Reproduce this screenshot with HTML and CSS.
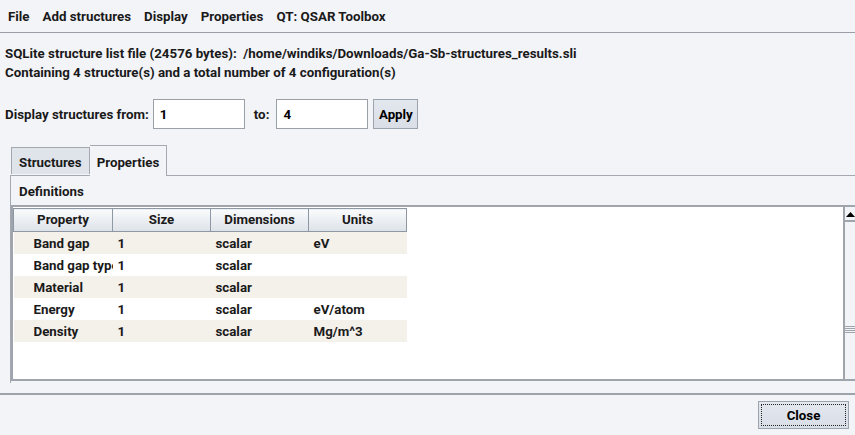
FILE: index.html
```html
<!DOCTYPE html>
<html lang="en">
<head>
    <meta charset="UTF-8">
    <title>Structure list</title>
    <link rel="stylesheet" href="styles.css">
</head>
<body>
    <div class="menubar">
        <span class="menu">File</span>
        <span class="menu">Add structures</span>
        <span class="menu">Display</span>
        <span class="menu">Properties</span>
        <span class="menu">QT: QSAR Toolbox</span>
    </div>

    <div class="info">
        <div>SQLite structure list file (24576 bytes):&nbsp; /home/windiks/Downloads/Ga-Sb-structures_results.sli</div>
        <div>Containing 4 structure(s) and a total number of 4 configuration(s)</div>
    </div>

    <div class="range">
        <span>Display structures from:</span>
        <input class="field" type="text" value="1">
        <span class="to">to:</span>
        <input class="field" type="text" value="4">
        <button class="btn apply">Apply</button>
    </div>

    <div class="tabs">
        <div class="tab">Structures</div>
        <div class="tab selected">Properties</div>
    </div>

    <div class="tab-body">
        <div class="label">Definitions</div>
        <div class="scroll">
            <div class="viewport">
                <table class="grid">
                    <thead>
                        <tr><th>Property</th><th>Size</th><th>Dimensions</th><th>Units</th></tr>
                    </thead>
                    <tbody>
                        <tr><td class="name">Band gap</td><td>1</td><td>scalar</td><td>eV</td></tr>
                        <tr><td class="name"><span class="clip">Band gap type</span></td><td>1</td><td>scalar</td><td></td></tr>
                        <tr><td class="name">Material</td><td>1</td><td>scalar</td><td></td></tr>
                        <tr><td class="name">Energy</td><td>1</td><td>scalar</td><td>eV/atom</td></tr>
                        <tr><td class="name">Density</td><td>1</td><td>scalar</td><td>Mg/m^3</td></tr>
                    </tbody>
                </table>
            </div>
            <div class="vbar">
                <div class="arrow">
                    <svg width="9" height="5" viewBox="0 0 9 5"><polygon points="0,5 9,5 4.5,0" fill="#000"/></svg>
                </div>
                <div class="thumb">
                    <div class="grip"></div>
                </div>
            </div>
        </div>
    </div>

    <div class="footer">
        <button class="btn close"><span class="focus">Close</span></button>
    </div>
</body>
</html>
```

FILE: styles.css
```css
body {
  margin: 0;
  width: 855px;
  height: 435px;
  overflow: hidden;
  background: #f3f4f8;
  font-family: Roboto, "Liberation Sans", sans-serif;
  font-weight: bold;
  font-size: 13.3px;
  color: #1a1a1a;
}

.menubar {
  display: flex;
  gap: 13px;
  height: 32px;
  align-items: center;
  padding-left: 8px;
  border-bottom: 1px solid #9a9ea6;
}

.info {
  padding: 11px 0 0 5px;
  line-height: 19px;
}

.range {
  display: flex;
  align-items: center;
  padding-left: 5px;
  margin-top: 17px;
  height: 30px;
}

.field {
  box-sizing: border-box;
  width: 92px;
  height: 30px;
  margin-left: 4px;
  border: 1px solid #9aa0a8;
  background: #fff;
  font: inherit;
  padding: 0 6px;
  color: #000;
}

.to {
  margin: 0 3px 0 9px;
}

.btn {
  font: inherit;
  color: #000;
  border: 1px solid #9ba3ad;
  background: linear-gradient(#e3e7ee, #d9dee7);
  padding: 0;
}

.apply {
  height: 30px;
  width: 45px;
  margin-left: 5px;
}

.tabs {
  display: flex;
  align-items: flex-end;
  margin: 16px 0 0 11px;
  height: 30px;
}

.tab {
  box-sizing: border-box;
  height: 27px;
  padding: 3px 7px 0;
  display: flex;
  align-items: center;
  border: 1px solid #a4a9b1;
  border-bottom: none;
  background: #dfe3ea;
  margin-bottom: 1px;
}

.tab.selected {
  height: 31px;
  padding: 2px 7px 0 7px;
  background: #f3f4f8;
  border-left: none;
  margin-bottom: -1px;
  position: relative;
}

.tab-body {
  margin-left: 10px;
  border-top: 1px solid #a4a9b1;
  border-left: 1px solid #a4a9b1;
  height: 207px;
}

.label {
  padding: 8px 0 0 8px;
  height: 21px;
}

.scroll {
  display: flex;
  height: 176px;
  border-top: 2px solid #a0a5ad;
  border-left: 2px solid #a0a5ad;
  border-bottom: 2px solid #a0a5ad;
  box-sizing: border-box;
}

.viewport {
  flex: 1;
  background: #fff;
  padding: 1px 0 0 0;
}

.grid {
  border-collapse: collapse;
  table-layout: fixed;
  width: 393px;
}

.grid th {
  height: 23px;
  box-sizing: border-box;
  padding: 0 0 1px;
  width: 98px;
  border: 1px solid #8e98a5;
  background: linear-gradient(#fafbfc, #dde2e8);
  text-align: center;
  font-weight: bold;
}

.grid th:first-child {
  width: 99px;
}

.grid td {
  height: 22px;
  padding: 0 0 0 5px;
  white-space: nowrap;
  overflow: hidden;
}

.grid td.name {
  padding-left: 20px;
}

.clip {
  display: block;
  width: 79px;
  overflow: hidden;
}

.grid tbody tr:nth-child(odd) {
  background: #f4f0ea;
}

.vbar {
  width: 10px;
  border-left: 2px solid #a0a5ad;
  display: flex;
  flex-direction: column;
  margin-top: -2px;
  margin-bottom: -2px;
}

.arrow {
  height: 12px;
  border-bottom: 2px solid #a0a5ad;
  display: flex;
  justify-content: flex-end;
  align-items: flex-end;
  padding: 0 0 3px 0;
}

.thumb {
  flex: 1;
  position: relative;
}

.grip {
  position: absolute;
  top: 104px;
  right: 0;
  width: 10px;
  height: 7px;
  background: repeating-linear-gradient(#9fa4ac 0 1px, transparent 1px 2px);
}

.footer {
  margin-top: 10px;
  border-top: 2px solid #9ea2aa;
  display: flex;
  justify-content: flex-end;
  padding: 6px 6px 0 0;
}

.close {
  width: 91px;
  height: 28px;
  padding: 2px;
}

.focus {
  display: flex;
  height: 100%;
  box-sizing: border-box;
  align-items: center;
  justify-content: center;
  border: 1px dotted #222;
}
```
